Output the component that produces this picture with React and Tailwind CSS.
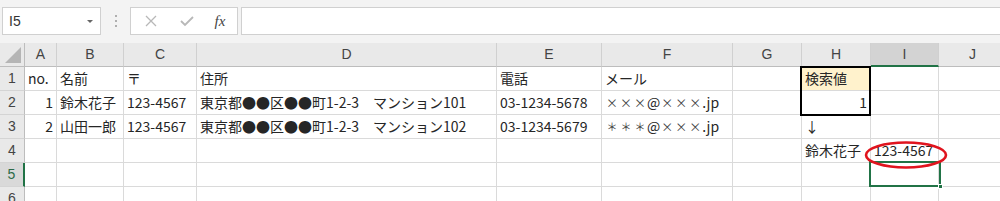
import React from "react";

const cols = [
  { w: "w-[32px]", l: "A" },
  { w: "w-[67px]", l: "B" },
  { w: "w-[73px]", l: "C" },
  { w: "w-[300px]", l: "D" },
  { w: "w-[105px]", l: "E" },
  { w: "w-[131px]", l: "F" },
  { w: "w-[69px]", l: "G" },
  { w: "w-[69px]", l: "H" },
  { w: "w-[68px]", l: "I" },
  { w: "w-[68px]", l: "J" },
];

function X() {
  return <span className="inline-block w-[14px] text-center text-[12px] text-[#444]">×</span>;
}
function Ast() {
  return <span className="inline-block w-[14px] text-center text-[11px] text-[#444]">＊</span>;
}

const rows = [
  ["no.", "名前", "〒", "住所", "電話", "メール", "", { t: "検索値", bg: true }, "", ""],
  [
    { t: "1", r: true },
    "鈴木花子",
    "123-4567",
    "東京都●●区●●町1-2-3　マンション101",
    "03-1234-5678",
    { n: (<><X /><X /><X />@<X /><X /><X />.jp</>) },
    "",
    { t: "1", r: true },
    "",
    "",
  ],
  [
    { t: "2", r: true },
    "山田一郎",
    "123-4567",
    "東京都●●区●●町1-2-3　マンション102",
    "03-1234-5679",
    { n: (<><Ast /><Ast /><Ast />@<X /><X /><X />.jp</>) },
    "",
    " ↓",
    "",
    "",
  ],
  ["", "", "", "", "", "", "", "鈴木花子", "123-4567", ""],
  ["", "", "", "", "", "", "", "", "", ""],
  ["", "", "", "", "", "", "", "", "", ""],
];

export default function App() {
  return (
    <div
      className="w-[1000px] h-[201px] overflow-hidden bg-white text-[#262626]"
      style={{ fontFamily: '"Noto Sans CJK JP", "Noto Sans", sans-serif' }}
    >
      {/* toolbar */}
      <div className="h-[43px] bg-[#f3f3f3] flex items-start pt-[7px] pl-[2px]">
        <div className="w-[99px] h-[28px] bg-white border border-[#d0d0d0] flex items-center justify-between pl-[6px] pr-[6px]">
          <span className="text-[14px] text-[#333]" style={{ fontFamily: '"Liberation Sans", sans-serif' }}>I5</span>
          <svg width="8" height="5" viewBox="0 0 8 5"><path d="M1 1 L7 1 L4 4 Z" fill="#666" /></svg>
        </div>
        <div className="w-[29px] h-[28px] flex items-center justify-center">
          <svg width="4" height="14" viewBox="0 0 4 14">
            <circle cx="2" cy="2" r="1" fill="#999" />
            <circle cx="2" cy="7" r="1" fill="#999" />
            <circle cx="2" cy="12" r="1" fill="#999" />
          </svg>
        </div>
        <div className="w-[108px] h-[28px] bg-white border border-[#d0d0d0] flex items-center">
          <div className="w-[36px] flex justify-center pl-[4px]">
            <svg width="12" height="12" viewBox="0 0 12 12"><path d="M1 1 L11 11 M11 1 L1 11" stroke="#b8b8b8" strokeWidth="1.3" fill="none" /></svg>
          </div>
          <div className="w-[36px] flex justify-center pl-[4px]">
            <svg width="14" height="12" viewBox="0 0 14 12"><path d="M1 6 L5 10 L13 2" stroke="#b8b8b8" strokeWidth="1.8" fill="none" /></svg>
          </div>
          <div className="w-[34px] flex justify-center">
            <span className="text-[15px] italic text-[#444]" style={{ fontFamily: '"Liberation Serif", serif' }}>fx</span>
          </div>
        </div>
        <div className="ml-[3px] flex-1 h-[28px] bg-white border-y border-l border-[#d0d0d0]"></div>
      </div>

      {/* grid */}
      <div className="relative">
        {/* header row */}
        <div className="flex h-[24px] bg-[#e9e9e9]" style={{ fontFamily: '"Liberation Sans", sans-serif' }}>
          <div className="w-[25px] h-[24px] border-r border-b border-[#bdbdbd] relative shrink-0">
            <svg className="absolute right-[3px] bottom-[3px]" width="16" height="16" viewBox="0 0 16 16"><path d="M16 0 L16 16 L0 16 Z" fill="#b5b5b5" /></svg>
          </div>
          {cols.map((c) => (
            <div
              key={c.l}
              className={
                c.w +
                " shrink-0 h-[24px] flex items-center justify-center text-[14px] text-[#444] border-r border-[#d0d0d0] " +
                (c.l === "I" ? "bg-[#d3d3d3] border-b-2 border-b-[#217346]" : "border-b border-b-[#bdbdbd]")
              }
            >
              {c.l}
            </div>
          ))}
        </div>
        {rows.map((row, ri) => (
          <div key={ri} className="flex h-[24px]">
            <div
              className={
                "w-[25px] shrink-0 h-[24px] flex items-center justify-center text-[14px] border-b border-b-[#d4d4d4] " +
                (ri === 4
                  ? "bg-[#d9d9d9] text-[#2d6a48] border-r-2 border-r-[#217346]"
                  : "bg-[#e9e9e9] text-[#444] border-r border-r-[#bdbdbd]")
              }
              style={{ fontFamily: '"Liberation Sans", sans-serif' }}
            >
              {ri + 1}
            </div>
            {row.map((cell, ci) => {
              const obj = typeof cell === "object" ? cell : { t: cell };
              return (
                <div
                  key={ci}
                  className={
                    cols[ci].w +
                    " shrink-0 h-[24px] flex items-center whitespace-nowrap text-[14px] px-[3px] border-r border-b border-[#dadada] " +
                    (obj.r ? "justify-end " : "justify-start ") +
                    (obj.bg ? "bg-[#fff2cc]" : "")
                  }
                >
                  {obj.n ? obj.n : obj.t}
                </div>
              );
            })}
          </div>
        ))}

        {/* H1:H2 thick border */}
        <div className="absolute left-[800px] top-[23px] w-[71px] h-[50px] border-2 border-black pointer-events-none"></div>
        {/* I5 selection */}
        <div className="absolute left-[869px] top-[118px] w-[72px] h-[26px] border-2 border-[#217346] pointer-events-none"></div>
        <div className="absolute left-[938px] top-[141px] w-[5px] h-[5px] bg-[#217346] border border-white"></div>
        {/* red ellipse */}
        <svg className="absolute left-[863px] top-[97px] pointer-events-none" width="86" height="30" viewBox="0 0 86 30">
          <ellipse cx="43" cy="15" rx="40" ry="12.5" fill="none" stroke="#e0141e" strokeWidth="2.6" />
        </svg>
      </div>
    </div>
  );
}
